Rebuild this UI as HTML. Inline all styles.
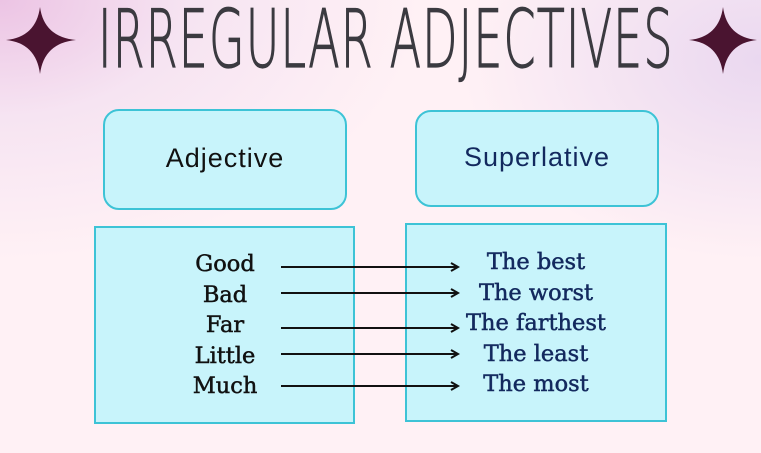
<!DOCTYPE html>
<html><head><style>
body{margin:0;width:761px;height:453px;overflow:hidden;position:relative;
background:radial-gradient(ellipse 420px 260px at 0 0,#ecc4e4 0%,#f6e4f2 45%,rgba(255,240,246,0) 100%),radial-gradient(ellipse 300px 200px at 761px 60px,#ead8f0 0%,rgba(255,240,246,0) 100%),#fff1f5;
font-family:"DejaVu Serif","Liberation Serif",serif;}
.b{position:absolute;background:#c8f4fb;border:2px solid #3dc3d6;box-sizing:border-box;}
.t{position:absolute;font-size:22.5px;color:#111;-webkit-text-stroke:0.5px #111;text-align:center;width:120px;line-height:30.5px;}
.r{color:#13295e;-webkit-text-stroke:0.5px #13295e;width:200px;}
h1{position:absolute;left:98px;top:0;margin:0;font-family:"DejaVu Sans","Liberation Sans",sans-serif;font-weight:200;font-size:80px;line-height:80px;color:#3b3a40;-webkit-text-stroke:1.2px #3b3a40;letter-spacing:2px;transform:scaleX(0.574);transform-origin:0 0;white-space:nowrap;}
.h{position:absolute;text-align:center;font-size:27px;font-family:'Liberation Sans',sans-serif;letter-spacing:1px;width:244px}
</style></head><body>
<svg style="position:absolute;left:0;top:0" width="761" height="80">
<path d="M40 7 Q44 37 76 40 Q44 43 40 74 Q36 43 6 40 Q36 37 40 7Z" fill="#4a1430"/>
<path d="M723 7 Q727 37 757 40 Q727 43 723 74 Q719 43 689 40 Q719 37 723 7Z" fill="#4a1430"/>
</svg>
<h1>IRREGULAR ADJECTIVES</h1>
<div class="b" style="left:103px;top:109px;width:244px;height:101px;border-radius:16px"></div>
<div class="b" style="left:415px;top:110px;width:244px;height:97px;border-radius:16px"></div>
<div class="h" style="left:103px;top:143px;color:#111">Adjective</div>
<div class="h" style="left:415px;top:142px;color:#13295e">Superlative</div>
<div class="b" style="left:94px;top:226px;width:261px;height:198px"></div>
<div class="b" style="left:405px;top:223px;width:262px;height:199px"></div>
<div class="t" style="left:165px;top:249px">Good<br>Bad<br>Far<br>Little<br>Much</div>
<div class="t r" style="left:436px;top:247px">The best<br>The worst<br>The farthest<br>The least<br>The most</div>
<svg style="position:absolute;left:0;top:0" width="761" height="453">
<g stroke="#111" stroke-width="2" fill="none">
<path d="M281 267H457M451 263L458 267L451 271"/>
<path d="M281 293H457M451 289L458 293L451 297"/>
<path d="M281 328H457M451 324L458 328L451 332"/>
<path d="M281 354H457M451 350L458 354L451 358"/>
<path d="M281 386H457M451 382L458 386L451 390"/>
</g></svg>
</body></html>
